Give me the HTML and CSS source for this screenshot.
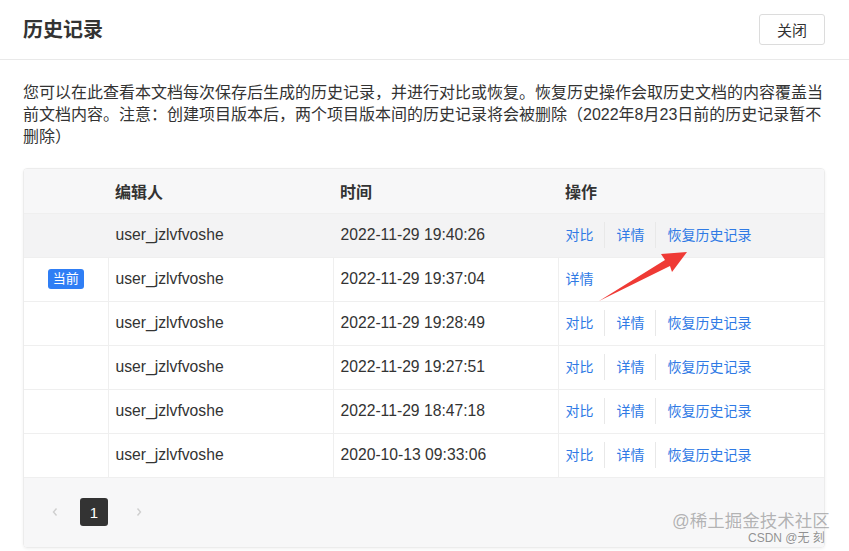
FILE: index.html
```html
<!DOCTYPE html>
<html lang="zh-CN">
<head>
<meta charset="utf-8">
<title>历史记录</title>
<link rel="stylesheet" href="styles.css">
</head>
<body>
<div class="dialog">
  <header class="dlg-head">
    <h1 class="dlg-title">历史记录</h1>
    <button class="btn-close" type="button">关闭</button>
  </header>
  <div class="dlg-body">
    <p class="desc">您可以在此查看本文档每次保存后生成的历史记录，并进行对比或恢复。恢复历史操作会取历史文档的内容覆盖当前文档内容。注意：创建项目版本后，两个项目版本间的历史记录将会被删除（2022年8月23日前的历史记录暂不<span class="nowrap">删除）</span></p>
    <div class="table-wrap">
      <table class="hist">
        <colgroup>
          <col class="c-tag"><col class="c-user"><col class="c-time"><col class="c-op">
        </colgroup>
        <thead>
          <tr><th></th><th>编辑人</th><th>时间</th><th>操作</th></tr>
        </thead>
        <tbody>
          <tr class="hover">
            <td></td><td>user_jzlvfvoshe</td><td>2022-11-29 19:40:26</td>
            <td><div class="ops"><a class="op">对比</a><a class="op">详情</a><a class="op">恢复历史记录</a></div></td>
          </tr>
          <tr>
            <td class="tag-cell"><span class="badge">当前</span></td><td>user_jzlvfvoshe</td><td>2022-11-29 19:37:04</td>
            <td><div class="ops"><a class="op">详情</a></div></td>
          </tr>
          <tr>
            <td></td><td>user_jzlvfvoshe</td><td>2022-11-29 19:28:49</td>
            <td><div class="ops"><a class="op">对比</a><a class="op">详情</a><a class="op">恢复历史记录</a></div></td>
          </tr>
          <tr>
            <td></td><td>user_jzlvfvoshe</td><td>2022-11-29 19:27:51</td>
            <td><div class="ops"><a class="op">对比</a><a class="op">详情</a><a class="op">恢复历史记录</a></div></td>
          </tr>
          <tr>
            <td></td><td>user_jzlvfvoshe</td><td>2022-11-29 18:47:18</td>
            <td><div class="ops"><a class="op">对比</a><a class="op">详情</a><a class="op">恢复历史记录</a></div></td>
          </tr>
          <tr>
            <td></td><td>user_jzlvfvoshe</td><td>2020-10-13 09:33:06</td>
            <td><div class="ops"><a class="op">对比</a><a class="op">详情</a><a class="op">恢复历史记录</a></div></td>
          </tr>
        </tbody>
      </table>
      <div class="pager">
        <span class="pg-arrow pg-prev"><svg width="8" height="10" viewBox="0 0 8 10"><path d="M5.5 1.5 L2.5 5 L5.5 8.5" fill="none" stroke="#cfcfcf" stroke-width="1.4"/></svg></span>
        <span class="pg-num">1</span>
        <span class="pg-arrow pg-next"><svg width="8" height="10" viewBox="0 0 8 10"><path d="M2.5 1.5 L5.5 5 L2.5 8.5" fill="none" stroke="#cfcfcf" stroke-width="1.4"/></svg></span>
      </div>
    </div>
  </div>
  <svg class="annot-arrow" width="96" height="58" viewBox="0 0 96 58"><polygon points="92,4 66,6 70,12 4,53 75,18 77,24" fill="#ef3a35"/></svg>
  <div class="watermark">
    <span class="wm-main">@稀土掘金技术社区</span>
    <span class="wm-sub">CSDN @无 刻</span>
  </div>
</div>
</body>
</html>
```

FILE: styles.css
```css
* { box-sizing: border-box; }
html, body { margin: 0; padding: 0; background: #fff; }
body {
  font-family: "Liberation Sans", "Noto Sans CJK SC", sans-serif;
  color: #333;
}
.dialog {
  position: relative;
  width: 849px;
  height: 551px;
  overflow: hidden;
}
.dlg-head {
  height: 60px;
  border-bottom: 1px solid #e9e9e9;
  display: flex;
  align-items: center;
  justify-content: space-between;
  padding: 0 24px 0 23px;
}
.dlg-title {
  margin: 0;
  font-size: 20px;
  font-weight: 700;
  color: #333;
  line-height: 28px;
}
.btn-close {
  width: 66px;
  height: 31px;
  border: 1px solid #dcdcdc;
  border-radius: 3px;
  background: #fff;
  font-family: inherit;
  font-size: 15px;
  color: #333;
  padding: 0;
  margin-top: -1px;
}
.dlg-body {
  padding: 0 24px 0 23px;
}
.desc {
  margin: 22px 0 20px;
  font-size: 16px;
  line-height: 22px;
  color: #333;
}
.nowrap { white-space: nowrap; }
.table-wrap {
  border: 1px solid #ececec;
  border-radius: 4px;
  box-shadow: 0 1px 3px rgba(0,0,0,0.06);
  overflow: hidden;
}
.hist {
  width: 100%;
  border-collapse: collapse;
  table-layout: fixed;
}
.c-tag { width: 84px; }
.c-user { width: 225px; }
.c-time { width: 225px; }
.hist th {
  background: #f7f7f8;
  height: 44px;
  text-align: left;
  font-size: 16px;
  font-weight: 700;
  color: #333;
  padding: 0 7px;
  border-bottom: 1px solid #efefef;
}
.hist td {
  height: 44px;
  padding: 0 7px;
  font-size: 15.7px;
  color: #333;
  border-bottom: 1px solid #efefef;
  border-left: 1px solid #efefef;
  vertical-align: middle;
  white-space: nowrap;
}
.hist td:first-child { border-left: none; }
.hist tr.hover td {
  background: #f3f3f4;
  border-left-color: transparent;
}
.tag-cell { text-align: center; }
.badge {
  display: inline-block;
  background: #2f7ef5;
  color: #fff;
  font-size: 13px;
  height: 20px;
  line-height: 20px;
  padding: 0 5px;
  border-radius: 3px;
  vertical-align: middle;
}
.ops {
  display: flex;
  align-items: center;
  height: 26px;
}
.op {
  font-size: 14px;
  color: #2f7ae5;
  padding: 0 10px 0 12px;
  line-height: 26px;
  border-left: 1px solid #e8e8e8;
  cursor: pointer;
}
.op:first-child {
  padding-left: 0;
  border-left: none;
}
.pager {
  height: 69px;
  background: #f7f7f8;
  display: flex;
  align-items: center;
  padding-left: 17px;
}
.pg-arrow {
  width: 28px;
  height: 28px;
  display: flex;
  align-items: center;
  justify-content: center;
}
.pg-num {
  width: 28px;
  height: 28px;
  margin-left: 11px;
  margin-right: 17px;
  background: #333;
  color: #fff;
  border-radius: 3px;
  display: flex;
  align-items: center;
  justify-content: center;
  font-size: 15px;
}
.annot-arrow {
  position: absolute;
  left: 595px;
  top: 248px;
}
.watermark {
  position: absolute;
  left: 672px;
  top: 509px;
  width: 170px;
  pointer-events: none;
}
.wm-main {
  display: block;
  font-size: 17.5px;
  line-height: 24px;
  color: rgba(120,120,120,0.55);
  white-space: nowrap;
}
.wm-sub {
  position: absolute;
  left: 76px;
  top: 22px;
  font-size: 12px;
  line-height: 14px;
  color: rgba(100,100,100,0.7);
  white-space: nowrap;
}
```
